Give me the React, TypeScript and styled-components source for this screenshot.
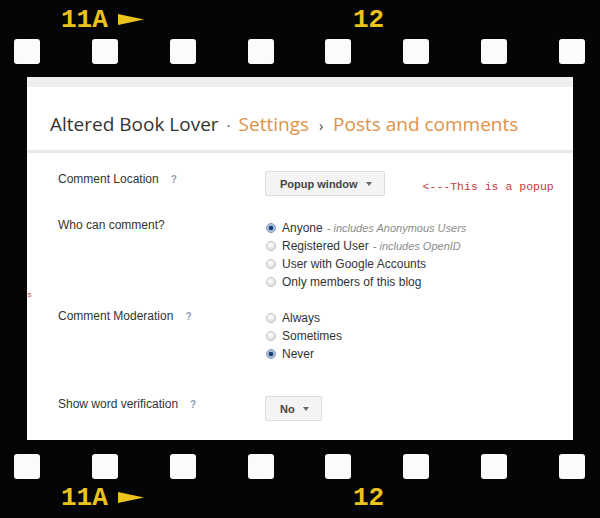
import React from 'react';
import styled, { createGlobalStyle } from 'styled-components';

const GlobalStyle = createGlobalStyle`
    html, body {
        margin: 0;
        padding: 0;
        background: #050508;
    }
`;

const Film = styled.div`
    width: 600px;
    height: 518px;
    background: #050508;
    display: flex;
    flex-direction: column;
    overflow: hidden;
`;

const EdgeLabels = styled.div<{ $top: number }>`
    display: grid;
    grid-template-columns: 292px auto;
    padding-left: 61px;
    margin-top: ${p => p.$top}px;
    height: 26px;
`;

const EdgeGroup = styled.div`
    display: flex;
    align-items: center;
`;

const FrameNo = styled.span`
    font-family: 'Liberation Mono', 'Courier New', monospace;
    font-weight: bold;
    font-size: 26px;
    line-height: 26px;
    color: #ecc21c;
`;

const Arrow = styled.svg`
    margin-left: 10px;
    margin-top: -2px;
`;

const Perforations = styled.div<{ $top: number }>`
    display: flex;
    justify-content: space-between;
    padding: 0 15px 0 14px;
    margin-top: ${p => p.$top}px;
`;

const Hole = styled.div`
    width: 26px;
    height: 25px;
    border-radius: 3px;
    background: #fbfbfb;
`;

const Screen = styled.div`
    position: relative;
    width: 546px;
    height: 363px;
    margin: 13px 0 0 27px;
    background: #fff;
    overflow: hidden;
    font-family: 'Liberation Sans', Arial, sans-serif;
    color: #333;
`;

const TopBand = styled.div`
    height: 10px;
    background: #eeeeee;
`;

const Header = styled.div`
    height: 66px;
    box-sizing: border-box;
    padding: 23px 0 0 23px;
    border-bottom: 3px solid #e9e9e9;
    display: flex;
    align-items: baseline;
    font-family: 'Open Sans', sans-serif;
    font-size: 19px;
    line-height: 28px;
    white-space: nowrap;
`;

const BlogName = styled.span`
    color: #333;
`;

const Crumb = styled.span`
    color: #e0914a;
`;

const Sep = styled.span<{ $w: number }>`
    display: inline-block;
    width: ${p => p.$w}px;
    text-align: center;
    color: #444;
    font-size: 14px;
`;

const Content = styled.div`
    padding: 18px 0 0 31px;
`;

const Row = styled.div<{ $gap: number }>`
    display: grid;
    grid-template-columns: 207px 1fr;
    align-items: start;
    margin-top: ${p => p.$gap}px;
`;

const Label = styled.div`
    font-size: 12px;
    line-height: 14px;
    color: #333;
    display: flex;
    align-items: center;
`;

const Help = styled.span<{ $ml: number }>`
    margin-left: ${p => p.$ml}px;
    font-size: 10px;
    font-weight: bold;
    color: #8f9db3;
    margin-top: 2px;
`;

const Controls = styled.div`
    display: flex;
    align-items: center;
`;

const DropButton = styled.div`
    height: 25px;
    box-sizing: border-box;
    display: inline-flex;
    align-items: center;
    gap: 8px;
    padding: 0 12px 0 14px;
    background: #f4f4f4;
    border: 1px solid #dcdcdc;
    border-radius: 2px;
    font-size: 11px;
    font-weight: bold;
    color: #444;
`;

const Caret = styled.span`
    width: 0;
    height: 0;
    border-left: 3.5px solid transparent;
    border-right: 3.5px solid transparent;
    border-top: 4px solid #666;
`;

const Note = styled.span`
    margin-left: 38px;
    margin-top: 5px;
    font-family: 'Liberation Mono', 'Courier New', monospace;
    font-size: 11.5px;
    color: #c33c3c;
`;

const RadioList = styled.div`
    display: flex;
    flex-direction: column;
    margin-top: 1px;
`;

const RadioItem = styled.label`
    display: flex;
    align-items: center;
    height: 18px;
    font-size: 12px;
    color: #333;
`;

const RadioDot = styled.span<{ $on?: boolean }>`
    width: 10px;
    height: 10px;
    box-sizing: border-box;
    margin: 0 6px 0 1px;
    border-radius: 50%;
    border: 1px solid ${p => (p.$on ? '#7d95b5' : '#bdbdbd')};
    background: ${p =>
        p.$on
            ? 'radial-gradient(circle at 50% 50%, #1d3f73 0 2px, #9fb6d6 2.6px, #e4ecf6 100%)'
            : 'radial-gradient(circle at 40% 35%, #ffffff 0, #e6e6e6 60%, #d2d2d2 100%)'};
`;

const Hint = styled.span`
    margin-left: 4px;
    font-size: 11px;
    font-style: italic;
    color: #8c8c8c;
`;

const EdgeMark = styled.span`
    position: absolute;
    left: 0;
    top: 214px;
    font-family: 'Liberation Mono', 'Courier New', monospace;
    font-size: 8px;
    line-height: 8px;
    color: #d04040;
`;

const holes = Array.from({ length: 8 });

const FilmEdge = ({ top }: { top: number }) => (
    <EdgeLabels $top={top}>
        <EdgeGroup>
            <FrameNo>11A</FrameNo>
            <Arrow width="26" height="11" viewBox="0 0 26 11">
                <polygon points="0,0 26,5.5 0,11" fill="#ecc21c" />
            </Arrow>
        </EdgeGroup>
        <FrameNo>12</FrameNo>
    </EdgeLabels>
);

const Radio = ({ on, text, hint }: { on?: boolean; text: string; hint?: string }) => (
    <RadioItem>
        <RadioDot $on={on} />
        {text}
        {hint && <Hint>- {hint}</Hint>}
    </RadioItem>
);

const App = () => {
    return (
        <>
            <GlobalStyle />
            <Film>
                <FilmEdge top={7} />
                <Perforations $top={6}>
                    {holes.map((_, i) => (
                        <Hole key={i} />
                    ))}
                </Perforations>
                <Screen>
                    <EdgeMark>s</EdgeMark>
                    <TopBand />
                    <Header>
                        <BlogName>Altered Book Lover</BlogName>
                        <Sep $w={20}>·</Sep>
                        <Crumb>Settings</Crumb>
                        <Sep $w={24}>›</Sep>
                        <Crumb>Posts and comments</Crumb>
                    </Header>
                    <Content>
                        <Row $gap={0}>
                            <Label>
                                Comment Location<Help $ml={12}>?</Help>
                            </Label>
                            <Controls>
                                <DropButton>
                                    Popup window <Caret />
                                </DropButton>
                                <Note>&lt;---This is a popup</Note>
                            </Controls>
                        </Row>
                        <Row $gap={22}>
                            <Label>Who can comment?</Label>
                            <RadioList>
                                <Radio on text="Anyone" hint="includes Anonymous Users" />
                                <Radio text="Registered User" hint="includes OpenID" />
                                <Radio text="User with Google Accounts" />
                                <Radio text="Only members of this blog" />
                            </RadioList>
                        </Row>
                        <Row $gap={17}>
                            <Label>
                                Comment Moderation<Help $ml={12}>?</Help>
                            </Label>
                            <RadioList>
                                <Radio text="Always" />
                                <Radio text="Sometimes" />
                                <Radio on text="Never" />
                            </RadioList>
                        </Row>
                        <Row $gap={33}>
                            <Label>
                                Show word verification<Help $ml={12}>?</Help>
                            </Label>
                            <Controls>
                                <DropButton>
                                    No <Caret />
                                </DropButton>
                            </Controls>
                        </Row>
                    </Content>
                </Screen>
                <Perforations $top={14}>
                    {holes.map((_, i) => (
                        <Hole key={i} />
                    ))}
                </Perforations>
                <FilmEdge top={6} />
            </Film>
        </>
    );
};

export default App;
